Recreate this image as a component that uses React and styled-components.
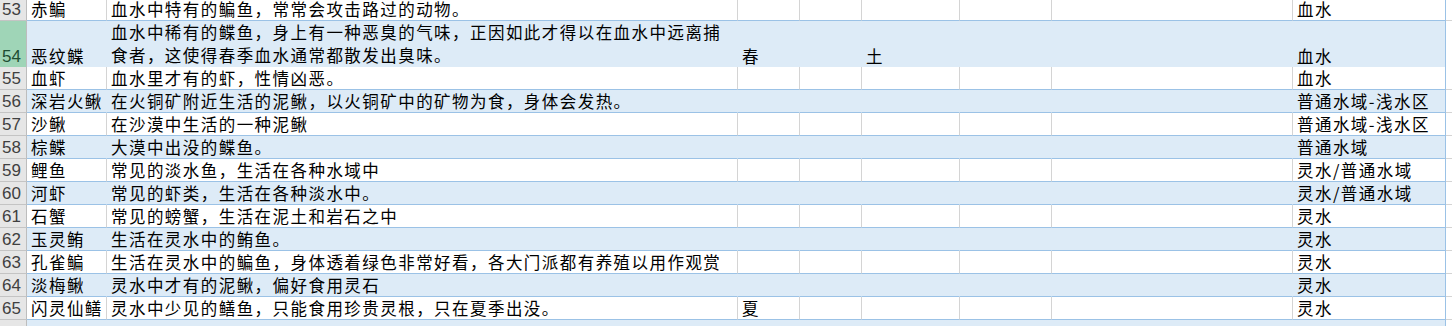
import React from "react";
import styled, { createGlobalStyle } from "styled-components";

const GlobalStyle = createGlobalStyle`
  html, body {
    margin: 0;
    padding: 0;
    background: #ffffff;
    overflow: hidden;
  }
`;

// column widths, borders included (row header, B .. I, then the rest)
const COLS = "27px 80px 631px 62px 62px 98px 92px 241px 153px 1fr";

const rows = [
  { n: 53, name: "赤鳊", desc: ["血水中特有的鳊鱼，常常会攻击路过的动物。"], where: "血水" },
  {
    n: 54,
    name: "恶纹鲽",
    desc: [
      "血水中稀有的鲽鱼，身上有一种恶臭的气味，正因如此才得以在血水中远离捕",
      "食者，这使得春季血水通常都散发出臭味。",
    ],
    season: "春",
    element: "土",
    where: "血水",
    tall: true,
    selected: true,
  },
  { n: 55, name: "血虾", desc: ["血水里才有的虾，性情凶恶。"], where: "血水" },
  { n: 56, name: "深岩火鳅", desc: ["在火铜矿附近生活的泥鳅，以火铜矿中的矿物为食，身体会发热。"], where: "普通水域-浅水区" },
  { n: 57, name: "沙鳅", desc: ["在沙漠中生活的一种泥鳅"], where: "普通水域-浅水区" },
  { n: 58, name: "棕鲽", desc: ["大漠中出没的鲽鱼。"], where: "普通水域" },
  { n: 59, name: "鲤鱼", desc: ["常见的淡水鱼，生活在各种水域中"], where: "灵水/普通水域" },
  { n: 60, name: "河虾", desc: ["常见的虾类，生活在各种淡水中。"], where: "灵水/普通水域" },
  { n: 61, name: "石蟹", desc: ["常见的螃蟹，生活在泥土和岩石之中"], where: "灵水" },
  { n: 62, name: "玉灵鲔", desc: ["生活在灵水中的鲔鱼。"], where: "灵水" },
  { n: 63, name: "孔雀鳊", desc: ["生活在灵水中的鳊鱼，身体透着绿色非常好看，各大门派都有养殖以用作观赏"], where: "灵水" },
  { n: 64, name: "淡梅鳅", desc: ["灵水中才有的泥鳅，偏好食用灵石"], where: "灵水" },
  { n: 65, name: "闪灵仙鳝", desc: ["灵水中少见的鳝鱼，只能食用珍贵灵根，只在夏季出没。"], season: "夏", where: "灵水" },
  { n: 66, name: "", desc: [""], where: "" },
];

export default function App() {
  return (
    <>
      <GlobalStyle />
      <Sheet>
        {rows.map((r) => {
          const band = r.n % 2 === 0;
          return (
            <Row key={r.n} $tall={r.tall}>
              <RowHead $selected={r.selected}>{r.n === 66 ? "" : r.n}</RowHead>
              <Cell $band={band}>{r.name}</Cell>
              <Cell $band={band}>
                <Lines $wrap={r.desc.length > 1}>
                  {r.desc.map((line, i) => (
                    <div key={i}>{line}</div>
                  ))}
                </Lines>
              </Cell>
              <Cell $band={band}>{r.season}</Cell>
              <Cell $band={band} />
              <Cell $band={band}>{r.element}</Cell>
              <Cell $band={band} />
              <Cell $band={band} />
              <Cell $band={band} $edge>
                {r.where}
              </Cell>
              <Outside />
            </Row>
          );
        })}
      </Sheet>
    </>
  );
}

const Sheet = styled.div`
  margin-top: -2px;
  width: 1452px;
  font-family: "Noto Sans CJK SC", "Noto Sans", sans-serif;
  font-size: 16.5px;
  letter-spacing: 1.45px;
  line-height: 22px;
  color: #000000;
`;

const Row = styled.div`
  display: grid;
  grid-template-columns: ${COLS};
  height: ${(p) => (p.$tall ? "46px" : "23px")};
`;

const RowHead = styled.div`
  box-sizing: border-box;
  display: flex;
  align-items: flex-end;
  padding-left: 2px;
  background: ${(p) => (p.$selected ? "#9fd5b7" : "#e6e6e6")};
  border-right: 1px solid #bdbdbd;
  border-bottom: 1px solid #c4c4c4;
  color: ${(p) => (p.$selected ? "#1d4d33" : "#404040")};
  font-family: "Liberation Sans Narrow", "Liberation Sans", sans-serif;
  font-size: 17px;
  letter-spacing: 0;
  line-height: 21px;
`;

const Cell = styled.div`
  box-sizing: border-box;
  display: flex;
  align-items: flex-end;
  padding-left: 4px;
  white-space: nowrap;
  overflow: visible;
  background: ${(p) => (p.$band ? "#ddebf7" : "#ffffff")};
  border-bottom: 1px solid #9bc2e6;
  border-right: 1px solid
    ${(p) => (p.$edge ? "#9bc2e6" : p.$band ? "#ddebf7" : "#d4d4d4")};
`;

const Lines = styled.div`
  line-height: ${(p) => (p.$wrap ? "23px" : "22px")};
`;

const Outside = styled.div`
  background: #ffffff;
  border-bottom: 1px solid #d4d4d4;
`;
